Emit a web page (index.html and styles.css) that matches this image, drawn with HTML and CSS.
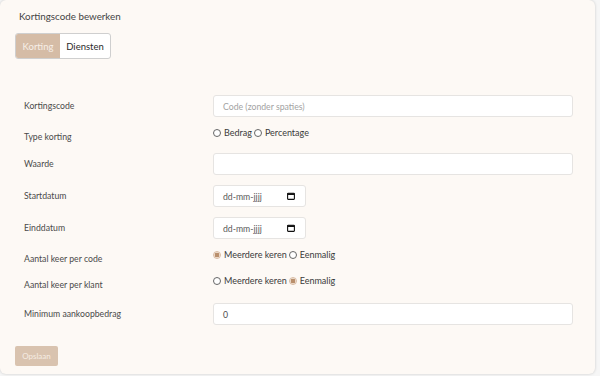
FILE: index.html
```html
<!DOCTYPE html>
<html lang="nl">
<head>
<meta charset="utf-8">
<title>Kortingscode bewerken</title>
<link rel="stylesheet" href="styles.css">
</head>
<body>
<div class="card">
  <div class="title">Kortingscode bewerken</div>
  <div class="tabs">
    <div class="tab active">Korting</div>
    <div class="tab">Diensten</div>
  </div>
  <div class="form">
    <div class="row">
      <div class="label">Kortingscode</div>
      <div class="field"><div class="input wide placeholder">Code (zonder spaties)</div></div>
    </div>
    <div class="row radio-row">
      <div class="label">Type korting</div>
      <div class="field radios">
        <span class="radio"></span><span class="rtext">Bedrag</span>
        <span class="radio"></span><span class="rtext">Percentage</span>
      </div>
    </div>
    <div class="row">
      <div class="label">Waarde</div>
      <div class="field"><div class="input wide"></div></div>
    </div>
    <div class="row">
      <div class="label">Startdatum</div>
      <div class="field"><div class="input date"><span>dd-mm-jjjj</span><svg class="cal" viewBox="0 0 8 8" width="8" height="8"><rect x="0.6" y="1.2" width="6.8" height="6.2" rx="0.6" fill="none" stroke="#111" stroke-width="1.1"/><rect x="0.6" y="1.2" width="6.8" height="1.8" fill="#111"/></svg></div></div>
    </div>
    <div class="row">
      <div class="label">Einddatum</div>
      <div class="field"><div class="input date"><span>dd-mm-jjjj</span><svg class="cal" viewBox="0 0 8 8" width="8" height="8"><rect x="0.6" y="1.2" width="6.8" height="6.2" rx="0.6" fill="none" stroke="#111" stroke-width="1.1"/><rect x="0.6" y="1.2" width="6.8" height="1.8" fill="#111"/></svg></div></div>
    </div>
    <div class="row radio-row">
      <div class="label">Aantal keer per code</div>
      <div class="field radios">
        <span class="radio checked"></span><span class="rtext">Meerdere keren</span>
        <span class="radio"></span><span class="rtext">Eenmalig</span>
      </div>
    </div>
    <div class="row radio-row">
      <div class="label">Aantal keer per klant</div>
      <div class="field radios">
        <span class="radio"></span><span class="rtext">Meerdere keren</span>
        <span class="radio checked"></span><span class="rtext">Eenmalig</span>
      </div>
    </div>
    <div class="row last">
      <div class="label">Minimum aankoopbedrag</div>
      <div class="field"><div class="input wide">0</div></div>
    </div>
  </div>
  <div class="actions"><div class="btn">Opslaan</div></div>
</div>
</body>
</html>
```
FILE: styles.css
```css
html, body {
  margin: 0;
  padding: 0;
}
body {
  background: #f6f6f6;
  font-family: Lato, "Open Sans", sans-serif;
  color: #3d3d3d;
  width: 600px;
  height: 376px;
  overflow: hidden;
}
.card {
  box-sizing: border-box;
  width: 595px;
  height: 374px;
  background: #fdf9f5;
  border-radius: 6px;
  box-shadow: 0 0 3px rgba(0, 0, 0, 0.18);
  padding: 9px 0 0 15px;
  display: flex;
  flex-direction: column;
}
.title {
  font-size: 9.8px;
  line-height: 14px;
  padding-left: 4px;
  color: #444;
}
.tabs {
  display: flex;
  margin-top: 10px;
  width: 96px;
  height: 26px;
  border: 1px solid #cfcfcf;
  border-radius: 3px;
  box-sizing: border-box;
  overflow: hidden;
  background: #fff;
}
.tab {
  font-size: 9.5px;
  display: flex;
  align-items: center;
  justify-content: center;
  color: #2a2a2a;
}
.tab.active {
  width: 44px;
  background: #d5bca6;
  color: #f7efe8;
}
.tab:not(.active) {
  flex: 1;
}
.form {
  margin-top: 36px;
  padding-left: 9px;
  display: flex;
  flex-direction: column;
  gap: 10px;
}
.row {
  display: flex;
  align-items: center;
  min-height: 22px;
}
.radio-row {
  min-height: 16px;
}
.row.last {
  margin-top: 2px;
}
.label {
  width: 189px;
  font-size: 8.7px;
  line-height: 12px;
  color: #4a4a4a;
  position: relative;
  top: -0.5px;
}
.radio-row .label {
  top: 2px;
}
.field {
  display: flex;
  align-items: center;
}
.radios {
  position: relative;
  top: -2px;
  font-size: 9px;
  line-height: 12px;
  color: #3a3a3a;
}
.radio {
  box-sizing: border-box;
  width: 8px;
  height: 8px;
  border-radius: 50%;
  border: 1px solid #666;
  background: #fff;
  margin-right: 3px;
}
.radio.checked {
  border-color: #d9bba3;
  background: radial-gradient(circle, #b98f6c 0 2.1px, #f3e6da 2.6px);
}
.rtext {
  margin-right: 2px;
}
.input {
  box-sizing: border-box;
  height: 22px;
  background: #fff;
  border: 1px solid #e6e4e2;
  border-radius: 3px;
  font-size: 8.7px;
  color: #4a4a4a;
  display: flex;
  align-items: center;
  padding-left: 9px;
}
.input.wide {
  width: 360px;
}
.input.placeholder {
  color: #a3a3a3;
}
.input.date {
  width: 93px;
  justify-content: space-between;
  padding-right: 10px;
  color: #5a5a5a;
}
.cal {
  display: block;
}
.actions {
  margin-top: 21px;
}
.btn {
  width: 43px;
  height: 20px;
  background: #d9c3af;
  color: #f6ece3;
  font-size: 8px;
  border-radius: 2px;
  display: flex;
  align-items: center;
  justify-content: center;
}
```
